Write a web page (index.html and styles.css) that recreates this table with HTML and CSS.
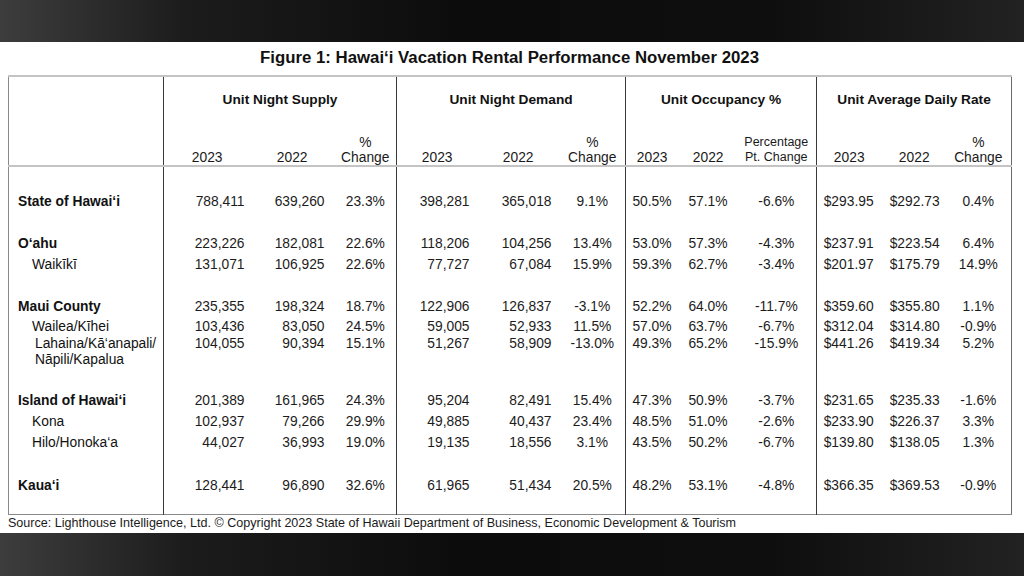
FILE: index.html
```html
<!DOCTYPE html>
<html lang="en">
<head>
<meta charset="utf-8">
<title>Figure 1: Hawai‘i Vacation Rental Performance November 2023</title>
<link rel="stylesheet" href="styles.css">
</head>
<body>
<div class="band band-top"></div>
<main class="sheet">
  <h1 class="title">Figure 1: Hawai‘i Vacation Rental Performance November 2023</h1>
  <table class="perf">
    <colgroup>
      <col class="c-label">
      <col class="c-sa"><col class="c-sb"><col class="c-sc">
      <col class="c-da"><col class="c-db"><col class="c-dc">
      <col class="c-oa"><col class="c-ob"><col class="c-oc">
      <col class="c-aa"><col class="c-ab"><col class="c-ac">
    </colgroup>
    <thead>
      <tr class="groups">
        <th class="corner" rowspan="2"></th>
        <th class="grp" colspan="3">Unit Night Supply</th>
        <th class="grp" colspan="3">Unit Night Demand</th>
        <th class="grp" colspan="3">Unit Occupancy %</th>
        <th class="grp" colspan="3">Unit Average Daily Rate</th>
      </tr>
      <tr class="years">
        <th class="sep hy-sa">2023</th><th class="hy-sb">2022</th><th class="pc">%<br>Change</th>
        <th class="sep hy-da">2023</th><th class="hy-db">2022</th><th class="pc">%<br>Change</th>
        <th class="sep hy-oa">2023</th><th class="hy-ob">2022</th><th class="pc small">Percentage<br>Pt. Change</th>
        <th class="sep hy-aa">2023</th><th class="hy-ab">2022</th><th class="pc">%<br>Change</th>
      </tr>
    </thead>
    <tbody>
      <tr class="first">
        <td class="lbl main">State of Hawai‘i</td>
        <td>788,411</td><td>639,260</td><td>23.3%</td>
        <td>398,281</td><td>365,018</td><td>9.1%</td>
        <td>50.5%</td><td>57.1%</td><td>-6.6%</td>
        <td>$293.95</td><td>$292.73</td><td>0.4%</td>
      </tr>
      <tr class="gap">
        <td class="lbl main">O‘ahu</td>
        <td>223,226</td><td>182,081</td><td>22.6%</td>
        <td>118,206</td><td>104,256</td><td>13.4%</td>
        <td>53.0%</td><td>57.3%</td><td>-4.3%</td>
        <td>$237.91</td><td>$223.54</td><td>6.4%</td>
      </tr>
      <tr>
        <td class="lbl sub">Waikīkī</td>
        <td>131,071</td><td>106,925</td><td>22.6%</td>
        <td>77,727</td><td>67,084</td><td>15.9%</td>
        <td>59.3%</td><td>62.7%</td><td>-3.4%</td>
        <td>$201.97</td><td>$175.79</td><td>14.9%</td>
      </tr>
      <tr class="gap">
        <td class="lbl main">Maui County</td>
        <td>235,355</td><td>198,324</td><td>18.7%</td>
        <td>122,906</td><td>126,837</td><td>-3.1%</td>
        <td>52.2%</td><td>64.0%</td><td>-11.7%</td>
        <td>$359.60</td><td>$355.80</td><td>1.1%</td>
      </tr>
      <tr class="tight">
        <td class="lbl sub">Wailea/Kīhei</td>
        <td>103,436</td><td>83,050</td><td>24.5%</td>
        <td>59,005</td><td>52,933</td><td>11.5%</td>
        <td>57.0%</td><td>63.7%</td><td>-6.7%</td>
        <td>$312.04</td><td>$314.80</td><td>-0.9%</td>
      </tr>
      <tr class="wrap">
        <td class="lbl sub2">Lahaina/Kā‘anapali/<br>Nāpili/Kapalua</td>
        <td>104,055</td><td>90,394</td><td>15.1%</td>
        <td>51,267</td><td>58,909</td><td>-13.0%</td>
        <td>49.3%</td><td>65.2%</td><td>-15.9%</td>
        <td>$441.26</td><td>$419.34</td><td>5.2%</td>
      </tr>
      <tr class="gap2">
        <td class="lbl main">Island of Hawai‘i</td>
        <td>201,389</td><td>161,965</td><td>24.3%</td>
        <td>95,204</td><td>82,491</td><td>15.4%</td>
        <td>47.3%</td><td>50.9%</td><td>-3.7%</td>
        <td>$231.65</td><td>$235.33</td><td>-1.6%</td>
      </tr>
      <tr>
        <td class="lbl sub">Kona</td>
        <td>102,937</td><td>79,266</td><td>29.9%</td>
        <td>49,885</td><td>40,437</td><td>23.4%</td>
        <td>48.5%</td><td>51.0%</td><td>-2.6%</td>
        <td>$233.90</td><td>$226.37</td><td>3.3%</td>
      </tr>
      <tr>
        <td class="lbl sub">Hilo/Honoka‘a</td>
        <td>44,027</td><td>36,993</td><td>19.0%</td>
        <td>19,135</td><td>18,556</td><td>3.1%</td>
        <td>43.5%</td><td>50.2%</td><td>-6.7%</td>
        <td>$139.80</td><td>$138.05</td><td>1.3%</td>
      </tr>
      <tr class="gap2 last">
        <td class="lbl main">Kaua‘i</td>
        <td>128,441</td><td>96,890</td><td>32.6%</td>
        <td>61,965</td><td>51,434</td><td>20.5%</td>
        <td>48.2%</td><td>53.1%</td><td>-4.8%</td>
        <td>$366.35</td><td>$369.53</td><td>-0.9%</td>
      </tr>
    </tbody>
  </table>
  <p class="source">Source: Lighthouse Intelligence, Ltd. © Copyright 2023 State of Hawaii Department of Business, Economic Development &amp; Tourism</p>
</main>
<div class="band band-bottom"></div>
</body>
</html>
```
FILE: styles.css
```css
* { box-sizing: border-box; }

html, body {
  margin: 0;
  padding: 0;
  width: 1024px;
  height: 576px;
  overflow: hidden;
  background: #ffffff;
  font-family: "Liberation Sans", Arial, sans-serif;
  color: #161616;
}

.band {
  width: 100%;
  background: linear-gradient(90deg, #3d3d3d 0%, #1c1c1c 18%, #0c0c0c 45%, #0e0e0e 75%, #222 100%);
}
.band-top { height: 42px; }
.band-bottom { height: 43px; }

.sheet {
  height: 491px;
  padding-top: 6px;
  background: #fff;
}

.title {
  margin: 0;
  height: 20px;
  line-height: 20px;
  text-align: center;
  font-size: 16.8px;
  font-weight: bold;
  color: #111;
  padding-right: 5px;
}

.perf {
  margin: 7px 0 0 8px;
  width: 1003px;
  table-layout: fixed;
  border-collapse: collapse;
  font-size: 13.8px;
  border-top: 2px solid #c4c4c4;
  border-left: 1px solid #8a8a8a;
  border-right: 1px solid #6a6a6a;
  border-bottom: 1px solid #8a8a8a;
}

.c-label { width: 155px; }
.c-sa { width: 91px; } .c-sb { width: 80px; } .c-sc { width: 62px; }
.c-da { width: 83px; } .c-db { width: 80px; } .c-dc { width: 66px; }
.c-oa { width: 52px; } .c-ob { width: 59px; } .c-oc { width: 80px; }
.c-aa { width: 63px; } .c-ab { width: 66px; } .c-ac { width: 66px; }

.perf th, .perf td {
  padding: 0;
  white-space: nowrap;
}

.groups th {
  height: 59px;
  vertical-align: top;
  padding-top: 14px;
  line-height: 17px;
  font-size: 13.7px;
  font-weight: bold;
  text-align: center;
  color: #111;
}
.groups .grp { border-left: 1px solid #3a3a3a; }
.corner { border-bottom: 2px solid #c4c4c4; }

.years th {
  font-weight: normal;
  line-height: 15px;
  height: 30px;
  vertical-align: bottom;
  text-align: right;
  border-bottom: 2px solid #c4c4c4;
  color: #1a1a1a;
}
.years .sep { border-left: 1px solid #3a3a3a; }
.years .pc { text-align: center; }
.years .small { font-size: 12.5px; line-height: 15px; }
.hy-sa { padding-right: 32px !important; }
.hy-sb { padding-right: 27px !important; }
.hy-da { padding-right: 27px !important; }
.hy-db { padding-right: 26px !important; }
.hy-oa { padding-right: 10px !important; }
.hy-ob { padding-right: 13px !important; }
.hy-aa { padding-right: 15px !important; }
.hy-ab { padding-right: 16px !important; }

.perf tbody td {
  line-height: 21px;
  text-align: right;
  vertical-align: top;
  color: #1c1c1c;
}
.perf tbody td:nth-child(2),
.perf tbody td:nth-child(5),
.perf tbody td:nth-child(8),
.perf tbody td:nth-child(11) { border-left: 1px solid #3a3a3a; }

.perf tbody td:nth-child(2),
.perf tbody td:nth-child(3),
.perf tbody td:nth-child(5) { padding-right: 10px; }
.perf tbody td:nth-child(6) { padding-right: 8px; }
.perf tbody td:nth-child(8) { padding-right: 6px; }
.perf tbody td:nth-child(9) { padding-right: 9px; }
.perf tbody td:nth-child(11),
.perf tbody td:nth-child(12) { padding-right: 6px; }
.perf tbody td:nth-child(4),
.perf tbody td:nth-child(7),
.perf tbody td:nth-child(10),
.perf tbody td:nth-child(13) { text-align: center; }

.perf tbody td.lbl { text-align: left; color: #111; }
.lbl.main { font-weight: bold; padding-left: 9px; }
.lbl.sub { padding-left: 23px; }
.lbl.sub2 { padding-left: 26px; }

.perf tr.first td { padding-top: 24px; }
.perf tr.gap td { padding-top: 21px; }
.perf tr.gap2 td { padding-top: 22px; }
.perf tr.tight td { line-height: 19px; }
.perf tr.wrap td { line-height: 16px; }
.perf tr.last td { padding-bottom: 18px; }

.source {
  margin: 0 0 0 8px;
  line-height: 16px;
  font-size: 12.55px;
  color: #1a1a1a;
}
```
